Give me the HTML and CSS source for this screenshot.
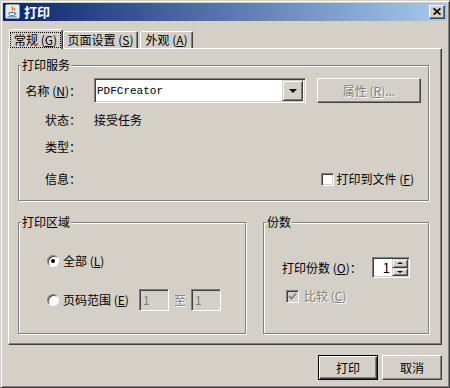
FILE: index.html
```html
<!DOCTYPE html>
<html>
<head>
    <meta charset="utf-8">
    <title>打印</title>
    <link rel="stylesheet" href="styles.css">
</head>
<body>
    <div class="window">
        <div class="titlebar">
            <span class="app-icon">
                <svg width="16" height="16" viewBox="0 0 16 16">
                    <rect x="0.5" y="0.5" width="14" height="14" rx="1.5" fill="#e6ecf4" stroke="#8c9bb3"/>
                    <path d="M7.5 2.5c-2 1.6 1.6 2.2-0.6 4.2M9.6 3.6c-1.2 1 1.1 1.4-0.4 2.8" fill="none" stroke="#e76f00" stroke-width="1.2"/>
                    <path d="M4 8.5h6v1.6c0 1-1.2 1.6-3 1.6s-3-.6-3-1.6z" fill="none" stroke="#5382a1" stroke-width="1"/>
                    <path d="M10 9c1.6 0 1.6 1.8 0 1.8" fill="none" stroke="#5382a1" stroke-width="1"/>
                    <path d="M2.5 12.8h9" stroke="#5382a1" stroke-width="1"/>
                </svg>
            </span>
            <span class="title">打印</span>
            <button class="close-btn" type="button">
                <svg width="8" height="7" viewBox="0 0 8 7">
                    <path d="M0.6 0.4l6.8 6.2M7.4 0.4l-6.8 6.2" stroke="#000" stroke-width="1.7"/>
                </svg>
            </button>
        </div>

        <div class="dialog-body">
            <div class="tabs">
                <div class="tab tab-active"><span class="focus-box">常规 (<u>G</u>)</span></div>
                <div class="tab tab-wide">页面设置 (<u>S</u>)</div>
                <div class="tab">外观 (<u>A</u>)</div>
            </div>

            <div class="tab-panel">
                <div class="group group-service">
                    <div class="group-title">打印服务</div>
                    <div class="row row-name">
                        <span class="field-label">名称 (<u>N</u>)：</span>
                        <div class="combo">
                            <span class="combo-value">PDFCreator</span>
                            <span class="combo-arrow"><span class="arrow-down"></span></span>
                        </div>
                        <button class="btn btn-props" type="button" disabled>属性 (<u>R</u>)...</button>
                    </div>
                    <div class="row row-status">
                        <span class="field-label">状态：</span>
                        <span>接受任务</span>
                    </div>
                    <div class="row row-type">
                        <span class="field-label">类型：</span>
                    </div>
                    <div class="row row-info">
                        <span class="field-label">信息：</span>
                        <label class="check check-file">
                            <span class="checkbox"></span>
                            <span>打印到文件 (<u>F</u>)</span>
                        </label>
                    </div>
                </div>

                <div class="group-row">
                    <div class="group group-range">
                        <div class="group-title">打印区域</div>
                        <div class="radio-row radio-all">
                            <span class="radio radio-on"></span>
                            <span class="radio-label">全部 (<u>L</u>)</span>
                        </div>
                        <div class="radio-row radio-pages">
                            <span class="radio"></span>
                            <span class="radio-label range-label">页码范围 (<u>E</u>)</span>
                            <span class="text-field">1</span>
                            <span class="range-to">至</span>
                            <span class="text-field">1</span>
                        </div>
                    </div>

                    <div class="group group-copies">
                        <div class="group-title">份数</div>
                        <div class="copies-row">
                            <span class="copies-label">打印份数 (<u>O</u>)：</span>
                            <div class="spinner">
                                <span class="spinner-value">1</span>
                                <span class="spinner-buttons">
                                    <span class="spin-btn spin-up"><span class="arrow-up"></span></span>
                                    <span class="spin-btn spin-down"><span class="arrow-down-small"></span></span>
                                </span>
                            </div>
                        </div>
                        <label class="check check-collate disabled">
                            <span class="checkbox checkbox-disabled">
                                <svg width="9" height="9" viewBox="0 0 9 9">
                                    <path d="M1 4l2.5 2.5L8 1.5" fill="none" stroke="#808080" stroke-width="1.8"/>
                                </svg>
                            </span>
                            <span>比较 (<u>C</u>)</span>
                        </label>
                    </div>
                </div>
            </div>

            <div class="actions">
                <button class="btn btn-default" type="button">打印</button>
                <button class="btn" type="button">取消</button>
            </div>
        </div>
    </div>
</body>
</html>
```

FILE: styles.css
```css
:root {
    --face: #D4D0C8;      /* classic button face */
    --shadow: #808080;
    --dark: #404040;
    --light: #ffffff;
    --title-from: #0A246A;
    --title-to: #A6CAF0;
}
body {
    margin: 0;
    background-color: var(--face);
    font-family: "Noto Sans CJK SC", "DejaVu Sans", sans-serif;
    font-size: 12px;
    line-height: 14px;
    color: #000;
}
u {
    text-decoration: underline;
    text-underline-offset: 1px;
}
button {
    font-family: inherit;
    font-size: 12px;
    padding: 0;
    margin: 0;
    background-color: var(--face);
    color: #000;
}

/* window frame */
.window {
    width: 450px;
    height: 388px;
    box-sizing: border-box;
    border: 1px solid;
    border-color: var(--face) var(--dark) var(--dark) var(--face);
    box-shadow: inset 1px 1px var(--light), inset -1px -1px var(--shadow);
    padding: 2px;
    display: flex;
    flex-direction: column;
}
.titlebar {
    height: 18px;
    display: flex;
    align-items: center;
    padding: 0 2px;
    background: linear-gradient(to right, var(--title-from), var(--title-to));
}
.app-icon {
    width: 16px;
    height: 16px;
    display: flex;
}
.title {
    margin-left: 3px;
    color: var(--light);
    font-weight: bold;
    font-size: 13px;
}
.close-btn {
    margin-left: auto;
    width: 16px;
    height: 14px;
    box-sizing: border-box;
    border: 1px solid;
    border-color: var(--light) var(--dark) var(--dark) var(--light);
    box-shadow: inset -1px -1px var(--shadow);
    display: flex;
    align-items: center;
    justify-content: center;
    padding: 0 1px 1px 0;
}

.dialog-body {
    flex: 1;
    display: flex;
    flex-direction: column;
    padding: 8px 5px 0;
}

/* tabs */
.tabs {
    display: flex;
    align-items: flex-end;
    height: 19px;
    margin-left: 1px;
}
.tab {
    width: 53px;
    height: 17px;
    box-sizing: border-box;
    border: 1px solid;
    border-bottom: none;
    border-color: var(--light) var(--dark) transparent var(--light);
    border-radius: 2px 2px 0 0;
    box-shadow: inset -1px 0 var(--shadow);
    display: flex;
    align-items: center;
    justify-content: center;
    background-color: var(--face);
}
.tab-wide {
    width: 75px;
    margin-right: 2px;
}
.tab-active {
    width: 54px;
    height: 20px;
    margin-bottom: -1px;
    position: relative;
    z-index: 1;
}
.focus-box {
    flex: 1;
    align-self: stretch;
    margin: 2px 1px 1px 0;
    border: 1px dotted #000;
    display: flex;
    align-items: center;
    justify-content: center;
}

.tab-panel {
    height: 297px;
    box-sizing: border-box;
    border: 1px solid;
    border-color: var(--light) var(--dark) var(--dark) var(--light);
    box-shadow: inset -1px -1px var(--shadow);
    display: flex;
    flex-direction: column;
}

/* etched group boxes */
.group {
    box-sizing: border-box;
    border: 1px solid var(--shadow);
    box-shadow: inset 1px 1px var(--light), 1px 1px var(--light);
    display: flex;
    flex-direction: column;
}
.group-title {
    align-self: flex-start;
    margin: -8px 0 0 2px;
    padding: 0 1px;
    background-color: var(--face);
}
.group-service {
    width: 411px;
    height: 136px;
    margin: 16px 0 0 9px;
}
.row {
    display: flex;
    align-items: center;
    height: 24px;
}
.row-name {
    height: 25px;
    margin-top: 6px;
}
.row-status {
    margin-top: 5px;
}
.row-type {
    margin-top: 3px;
}
.row-info {
    margin-top: 8px;
}
.field-label {
    width: 62px;
    margin-right: 13px;
    text-align: right;
    white-space: nowrap;
}

.combo {
    width: 212px;
    height: 25px;
    box-sizing: border-box;
    border: 1px solid;
    border-color: var(--shadow) var(--light) var(--light) var(--shadow);
    box-shadow: inset 1px 1px var(--dark), inset -1px -1px var(--face);
    background-color: var(--light);
    display: flex;
    align-items: center;
}
.combo-value {
    padding-left: 2px;
    font-family: "Liberation Mono", "DejaVu Sans Mono", monospace;
    font-size: 11px;
}
.combo-arrow {
    margin-left: auto;
    margin-right: 2px;
    width: 21px;
    height: 21px;
    box-sizing: border-box;
    border: 1px solid;
    border-color: var(--face) var(--dark) var(--dark) var(--face);
    box-shadow: inset 1px 1px var(--light), inset -1px -1px var(--shadow);
    background-color: var(--face);
    display: flex;
    align-items: center;
    justify-content: center;
}
.arrow-down {
    width: 0;
    height: 0;
    border-left: 4px solid transparent;
    border-right: 4px solid transparent;
    border-top: 4px solid #000;
}

.btn {
    width: 60px;
    height: 25px;
    box-sizing: border-box;
    border: 1px solid;
    border-color: var(--light) var(--dark) var(--dark) var(--light);
    box-shadow: inset -1px -1px var(--shadow);
}
.btn-props {
    width: 104px;
    margin-left: 11px;
    color: var(--shadow);
    text-shadow: 1px 1px var(--light);
}
.btn-default {
    border-color: #000;
    box-shadow: inset 1px 1px var(--light), inset -1px -1px var(--dark), inset -2px -2px var(--shadow);
}

/* check boxes and radios */
.check {
    display: flex;
    align-items: center;
}
.check-file {
    margin-left: auto;
    margin-right: 14px;
}
.checkbox {
    width: 13px;
    height: 13px;
    box-sizing: border-box;
    border: 1px solid;
    border-color: var(--shadow) var(--light) var(--light) var(--shadow);
    box-shadow: inset 1px 1px var(--dark), inset -1px -1px var(--face);
    background-color: var(--light);
    margin-right: 3px;
    display: flex;
    align-items: center;
    justify-content: center;
}
.checkbox-disabled {
    background-color: var(--face);
    margin-right: 5px;
}
.disabled {
    color: var(--shadow);
    text-shadow: 1px 1px var(--light);
}

.group-row {
    display: flex;
    margin: 21px 0 0 9px;
}
.group-range {
    width: 228px;
    height: 112px;
}
.group-copies {
    width: 166px;
    height: 112px;
    margin-left: 17px;
}
.radio-row {
    display: flex;
    align-items: center;
    margin-left: 28px;
}
.radio-all {
    height: 16px;
    margin-top: 24px;
}
.radio-pages {
    height: 22px;
    margin-top: 20px;
}
.radio {
    width: 12px;
    height: 12px;
    box-sizing: border-box;
    border-radius: 50%;
    border: 1px solid;
    border-color: var(--shadow) var(--light) var(--light) var(--shadow);
    box-shadow: inset 1px 1px var(--dark);
    background-color: var(--light);
    display: flex;
    align-items: center;
    justify-content: center;
}
.radio-on::after {
    content: "";
    width: 4px;
    height: 4px;
    border-radius: 50%;
    background-color: #000;
}
.radio-label {
    margin-left: 4px;
}
.range-label {
    width: 76px;
}
.text-field {
    width: 30px;
    height: 22px;
    box-sizing: border-box;
    border: 1px solid;
    border-color: var(--shadow) var(--light) var(--light) var(--shadow);
    box-shadow: inset 1px 1px var(--dark), inset -1px -1px var(--face);
    padding: 3px 0 0 3px;
    color: var(--shadow);
}
.range-to {
    margin: 0 5px;
    color: var(--shadow);
    text-shadow: 1px 1px var(--light);
}

.copies-row {
    display: flex;
    align-items: center;
    height: 21px;
    margin: 28px 0 0 18px;
}
.copies-label {
    width: 90px;
    white-space: nowrap;
}
.spinner {
    width: 38px;
    height: 21px;
    box-sizing: border-box;
    border: 1px solid;
    border-color: var(--shadow) var(--light) var(--light) var(--shadow);
    box-shadow: inset 1px 1px var(--dark), inset -1px -1px var(--face);
    background-color: var(--light);
    display: flex;
    padding: 1px;
}
.spinner-value {
    flex: 1;
    text-align: right;
    padding-right: 2px;
    font-size: 13px;
    line-height: 17px;
}
.spinner-buttons {
    width: 16px;
    display: flex;
    flex-direction: column;
}
.spin-btn {
    flex: 1;
    box-sizing: border-box;
    border: 1px solid;
    border-color: var(--face) var(--dark) var(--dark) var(--face);
    box-shadow: inset 1px 1px var(--light), inset -1px -1px var(--shadow);
    background-color: var(--face);
    display: flex;
    align-items: center;
    justify-content: center;
}
.arrow-up {
    border-left: 3px solid transparent;
    border-right: 3px solid transparent;
    border-bottom: 2px solid #000;
}
.arrow-down-small {
    border-left: 3px solid transparent;
    border-right: 3px solid transparent;
    border-top: 2px solid #000;
}
.check-collate {
    height: 16px;
    margin: 10px 0 0 22px;
}

.actions {
    display: flex;
    justify-content: flex-end;
    gap: 4px;
    margin-top: 10px;
}
```
